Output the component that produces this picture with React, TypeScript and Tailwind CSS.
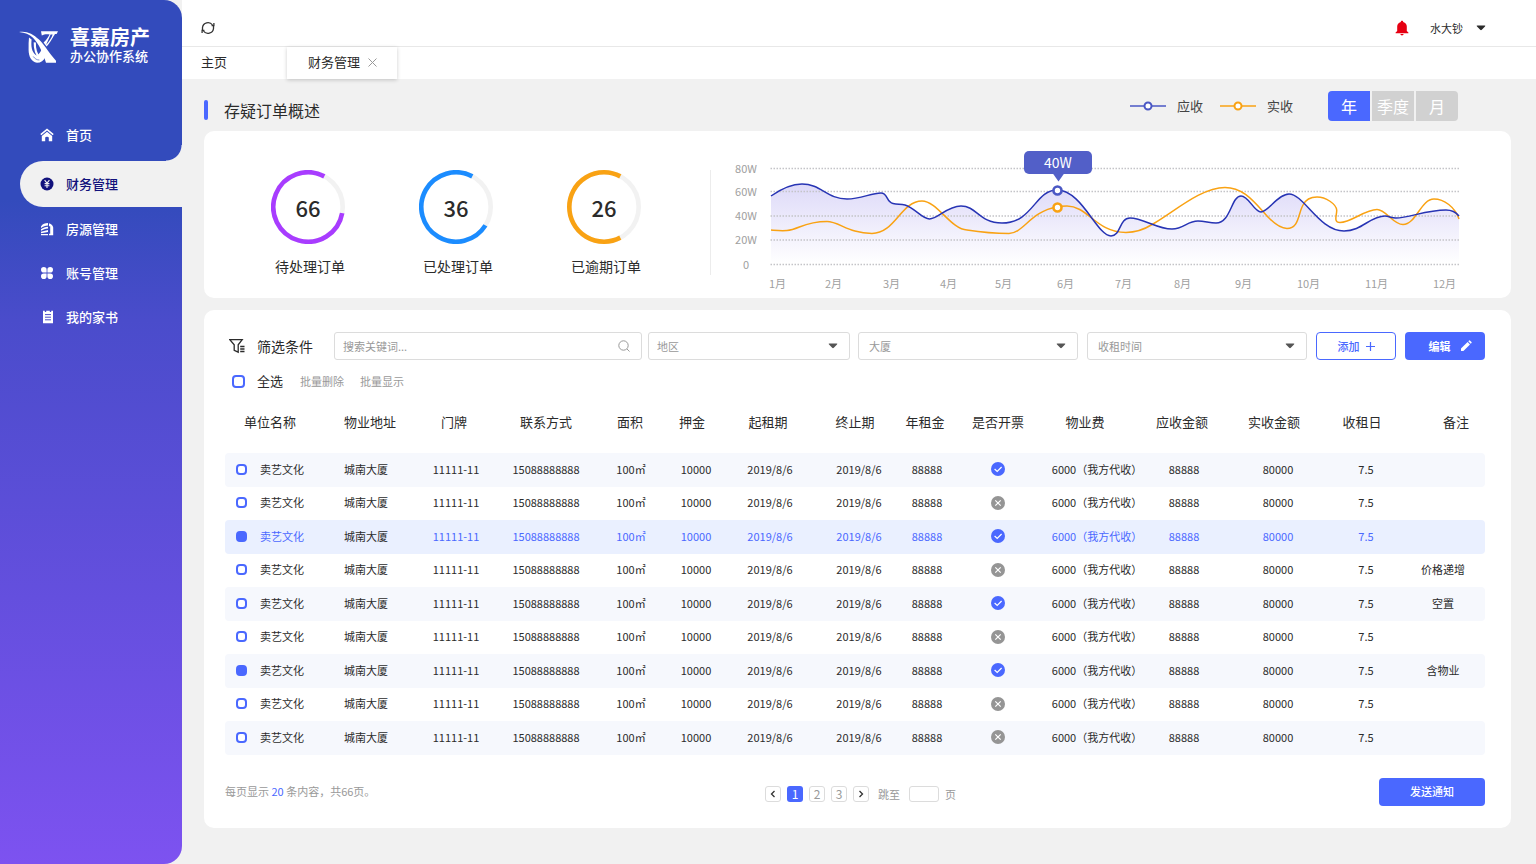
import React, { useState } from "react";

const MENU = [
  { label: "首页", icon: HomeIcon },
  { label: "财务管理", icon: YenIcon, active: true },
  { label: "房源管理", icon: BuildingIcon },
  { label: "账号管理", icon: CloverIcon },
  { label: "我的家书", icon: BookIcon },
];

const STATS = [
  { value: 66, label: "待处理订单", color: "#a83cff", start: 28, end: 100 },
  { value: 36, label: "已处理订单", color: "#1b8cff", start: 28, end: 122 },
  { value: 26, label: "已逾期订单", color: "#f9a213", start: 28, end: 152 },
];

const COLUMNS = [
  { title: "单位名称", width: "w-[92px]", head: "pr-0.5" },
  { title: "物业地址", width: "w-[98px]", head: "pl-2" },
  { title: "门牌", width: "w-[82px]", head: "pr-1" },
  { title: "联系方式", width: "w-[98px]", head: "" },
  { title: "面积", width: "w-[72px]", head: "pr-0.5" },
  { title: "押金", width: "w-[58px]", head: "pr-2" },
  { title: "起租期", width: "w-[90px]", head: "pr-1" },
  { title: "终止期", width: "w-[88px]", head: "pr-2" },
  { title: "年租金", width: "w-[48px]", head: "pr-1" },
  { title: "是否开票", width: "w-[94px]", head: "" },
  { title: "物业费", width: "w-[104px]", head: "pr-6" },
  { title: "应收金额", width: "w-[70px]", head: "pr-1" },
  { title: "实收金额", width: "w-[118px]", head: "pr-2" },
  { title: "收租日", width: "w-[58px]", head: "pr-2" },
  { title: "备注", width: "w-[90px]", head: "pl-8" },
];

const ROWS = [
  { invoiced: true, note: "" },
  { invoiced: false, note: "" },
  { invoiced: true, note: "", checked: true, highlight: true },
  { invoiced: false, note: "价格递增" },
  { invoiced: true, note: "空置" },
  { invoiced: false, note: "" },
  { invoiced: true, note: "含物业", checked: true },
  { invoiced: false, note: "" },
  { invoiced: false, note: "" },
];

const GRID_LINES = [
  { label: "80W", y: 37.5 },
  { label: "60W", y: 60.5 },
  { label: "40W", y: 85 },
  { label: "20W", y: 109 },
  { label: "0", y: 133.5 },
];

const MONTHS = [66, 122, 180, 237, 292, 354, 412, 471, 532, 597, 665, 733];

const DUE_LINE =
  "M60 65C70 58 80 53 91 53C110 53 116 68 136 68C150 68 160 62 170 62C177 62 175 71 182 72.5C187 73.5 189 73 194 74C204 77 211 88 218.5 88C227 88 236 75 250 75C266 75 268 92 291 92C322 92 324 59 346 59C371 59 386 105 400 105C410 105 408 87 419 87C432 87 446 98 461 98C473 98 476 90 487 90C494 90 498 92 505 92C520 92 520 65 530 65C538 65 543 81 550 81C557 81 567 63 578 63C593 63 608 100 633 100C651 100 659 85 674 85C678 85 680 87 685 87C698 87 715 79 735 79C740 79 744 80 748 85";
const PAID_LINE =
  "M60 99C66 99.5 70 100 76 99.5C88 98.5 93 90.5 116 90.5C128 90.5 138 102.5 161 102.5C184 102.5 190 70 211 70C226 70 240 98.5 256 99C272 101.5 284 102.5 298 102.5C312 102.5 320 80 346 76C349 75 352 75 356 75C377 75 385 101.5 415 101.5C426 101.5 434 98 442 93C463 81 490 56.5 514 56.5C530 56.5 540 67 552 80.5C560 90 568 97.5 576 97.5C588 97.5 587 83 592 74C595 68 601 66 606 66C615 66 625 73 625.7 79C626 84 622 91.5 629 91.5C640 91.5 654 78.5 666 78.5C675 78.5 682 93.5 692 93.5C705 93.5 710 68 723 68C733 68 744 76 748 88";

function HomeIcon() {
  return (
    <svg viewBox="0 0 14 14" className="size-3.5" fill="currentColor" aria-hidden="true">
      <path d="M7 .4 13.7 6.1 12.7 7.3 7 2.5 1.3 7.3.3 6.1Z" />
      <path d="M7 3.8 12.2 8.1V13.2H8.8V9.8Q8.8 8.8 7 8.8T5.2 9.8V13.2H1.8V8.1Z" />
    </svg>
  );
}

function YenIcon() {
  return (
    <svg viewBox="0 0 14 14" className="size-3.5" aria-hidden="true">
      <circle cx="7" cy="7" r="6.5" fill="currentColor" />
      <path d="M4.6 3.2 7 6.2 9.4 3.2M7 6.2V11M4.6 6.6H9.4M4.6 8.7H9.4" stroke="#f1f1f1" strokeWidth="1.1" fill="none" />
    </svg>
  );
}

function BuildingIcon() {
  return (
    <svg viewBox="0 0 14 14" className="size-3.5" fill="currentColor" aria-hidden="true">
      <path d="M1 4.4C2.6 2 5 1 8 1V3.4C5.2 3.6 3 4.4 1 6Z" />
      <path d="M1 7.2C3.2 5.6 5.2 4.9 8 4.7V6.6C5.2 6.9 3.2 7.6 1 8.8Z" />
      <path d="M1 9.8 8 8V9.9L1 11.2ZM1 11.9H8V13.2H1Z" />
      <path d="M9 1.2C11.6 2 13 3.4 13.2 5.6V13.2H9V11.8H10.2V4.2H9Z" />
    </svg>
  );
}

function CloverIcon() {
  return (
    <svg viewBox="0 0 14 14" className="size-3.5" fill="currentColor" aria-hidden="true">
      <path d="M3.8 1A2.8 2.8 0 1 0 3.8 6.6H6.6V3.8A2.8 2.8 0 0 0 3.8 1Z" />
      <path d="M10.2 1A2.8 2.8 0 1 1 10.2 6.6H7.4V3.8A2.8 2.8 0 0 1 10.2 1Z" />
      <path d="M3.8 13A2.8 2.8 0 1 1 3.8 7.4H6.6V10.2A2.8 2.8 0 0 1 3.8 13Z" />
      <path d="M10.2 13A2.8 2.8 0 1 0 10.2 7.4H7.4V10.2A2.8 2.8 0 0 0 10.2 13Z" />
    </svg>
  );
}

function BookIcon() {
  return (
    <svg viewBox="0 0 14 14" className="size-3.5" aria-hidden="true">
      <path d="M3 .8H4.8V2H6.2V.8H9.8V2H11.2V.8H13V13.2H3Z" fill="currentColor" />
      <path d="M5 4.6H11M5 7.2H11M5 9.8H11" stroke="#4a4ccb" strokeWidth="1" />
    </svg>
  );
}

function Logo() {
  return (
    <svg viewBox="0 0 42 36" className="mt-0.5 h-9 w-[42px] shrink-0" fill="#fff" aria-hidden="true">
      <path d="M0 4C7 2.6 14 5.6 20 11.6C26 17.6 30 25 37 32.8V34.8H27C24 25 20 16 14 9.8C10.400 6.400 6 4.600 0 4Z" />
      <path d="M22 3.200H39L37.600 6H36C34 9 32.600 12.400 27.600 18.600L24.600 14.600C28 11 29.600 8.400 30.600 6.400C27.600 5.800 25 6.200 22.800 7.600Z" />
      <path d="M31.600 6.600H33.600C32.600 10 30 14 27 17Z" fill="#334bbc" />
      <path d="M10 9.600 12.600 11.400C12 17 12.200 24 17.400 27.400C20 26.600 21.600 24 22.600 21L26.400 29C24.600 32.600 22 34.800 18 34.800C12.400 34 9.600 28.400 9.600 22Q9.400 15 10 9.600Z" />
      <path d="M15.800 14.400C15.600 20 17 26 20.800 30.400" stroke="#fff" strokeWidth="2.200" fill="none" />
      <path d="M14.200 28.400C16 31 18 32 20.400 32" stroke="#334bbc" strokeWidth=".6" fill="none" />
    </svg>
  );
}

function Caret({ className }: { className: string }) {
  return (
    <svg viewBox="0 0 10 6" className={className} fill="currentColor" aria-hidden="true">
      <path d="M1.4.5H8.6Q10 .5 9 1.5L5.8 4.8Q5 5.6 4.2 4.8L1 1.5Q0 .5 1.4.5Z" />
    </svg>
  );
}

function Ring({ color, start, end }: { color: string; start: number; end: number }) {
  const at = (deg: number) => {
    const a = ((deg - 90) * Math.PI) / 180;
    return `${37 + 34.7 * Math.cos(a)} ${37 + 34.7 * Math.sin(a)}`;
  };
  return (
    <svg viewBox="0 0 74 74" className="col-start-1 row-start-1 size-[74px]" fill="none" aria-hidden="true">
      <circle cx="37" cy="37" r="34.7" stroke="#f2f2f2" strokeWidth="4.6" />
      <path d={`M${at(end)}A34.7 34.7 0 1 1 ${at(start)}`} stroke={color} strokeWidth="4.6" />
    </svg>
  );
}

function Chart() {
  return (
    <svg viewBox="0 0 800 167" className="min-w-0 flex-1 text-[11px]" role="img" aria-label="应收与实收">
      <defs>
        <linearGradient id="due-area" x1="0" y1="50" x2="0" y2="133" gradientUnits="userSpaceOnUse">
          <stop offset="0" stopColor="#dcd8f8" />
          <stop offset="1" stopColor="#ffffff" />
        </linearGradient>
      </defs>
      <path d={`${DUE_LINE}V133H60Z`} fill="url(#due-area)" />
      {GRID_LINES.map((g) => (
        <g key={g.label}>
          <text x="35" y={g.y + 4} textAnchor="middle" fill="#a0a0a0">{g.label}</text>
          <path d={`M59.5 ${g.y}H748`} stroke="#c4c4c8" strokeWidth="1.4" strokeDasharray="1.5 1.5" />
        </g>
      ))}
      {MONTHS.map((x, i) => (
        <text key={x} x={x + 0.5} y="157" textAnchor="middle" fill="#a0a0a0">{`${i + 1}月`}</text>
      ))}
      <path d={PAID_LINE} fill="none" stroke="#f9a213" strokeWidth="1.5" />
      <path d={DUE_LINE} fill="none" stroke="#2734b4" strokeWidth="1.5" />
      <circle cx="346.5" cy="59.5" r="4" fill="#fff" stroke="#4a57c4" strokeWidth="2.6" />
      <circle cx="346.5" cy="76.5" r="4" fill="#fff" stroke="#f9a213" strokeWidth="2.6" />
      <rect x="313" y="20" width="68" height="23" rx="5" fill="#525fc8" />
      <path d="M341.5 42H353.5L347.5 50.5Z" fill="#525fc8" />
      <text x="347" y="37" textAnchor="middle" fill="#fff" className="text-[14px]">40W</text>
    </svg>
  );
}

function LegendItem({ label, color }: { label: string; color: string }) {
  return (
    <span className="flex items-center gap-[11px] text-[13px] text-[#444]">
      <svg viewBox="0 0 36 10" className="h-2.5 w-9" aria-hidden="true">
        <path d="M0 5H36" stroke={color} strokeWidth="1.5" />
        <circle cx="18" cy="5" r="3.5" fill="#fff" stroke={color} strokeWidth="2" />
      </svg>
      {label}
    </span>
  );
}

function FilterSelect({ label, className, pad }: { label: string; className: string; pad: string }) {
  return (
    <span className={`grid items-center ${className}`}>
      <select
        aria-label={label}
        className={`col-start-1 row-start-1 h-7 w-full appearance-none rounded-[3px] border border-[#dcdcdc] bg-white text-[11px] text-[#999] ${pad}`}
      >
        <option>{label}</option>
      </select>
      <Caret className="pointer-events-none col-start-1 row-start-1 mr-3 h-1.5 w-2.5 justify-self-end text-[#555]" />
    </span>
  );
}

function StatusIcon({ ok }: { ok: boolean }) {
  return (
    <svg viewBox="0 0 14 14" className="mx-auto size-3.5" fill="none" role="img" aria-label={ok ? "是" : "否"}>
      <circle cx="7" cy="7" r="7" fill={ok ? "#4a68ff" : "#959595"} />
      <path d={ok ? "M3.6 7 6.2 9.4 10.6 5" : "M4.3 4.3 9.7 9.7M9.7 4.3 4.3 9.7"} stroke="#fff" strokeWidth="1.2" />
    </svg>
  );
}

export default function App() {
  const [checked, setChecked] = useState(ROWS.map((r) => !!r.checked));
  const [period, setPeriod] = useState("年");
  const toggle = (i: number) => setChecked(checked.map((c, n) => (n === i ? !c : c)));
  const box =
    "shrink-0 appearance-none border-[#4a68ff] bg-white checked:bg-[#4a68ff]";
  const pager =
    "grid size-4 place-items-center rounded-[3px] border border-[#dcdcdc] text-[12px] leading-none text-[#999]";

  return (
    <div className="flex min-h-screen bg-[#f1f1f1] font-['Noto_Sans_CJK_SC',sans-serif] text-[#2b2b2b]">
      <aside className="w-[182px] shrink-0 rounded-r-[18px] bg-[linear-gradient(to_bottom,#334bbc_0px,#334bbc_200px,#4a4ccb_320px,#7d52f0_100%)] text-white">
        <div className="flex h-[113px] items-start gap-2 pt-[26px] pl-[19px]">
          <Logo />
          <div className="pl-px">
            <p className="text-[20px] leading-[22px] font-bold">喜嘉房产</p>
            <p className="text-[13px] leading-[15px] font-medium">办公协作系统</p>
          </div>
        </div>
        <nav className="flex flex-col text-[13px] font-medium">
          {MENU.map(({ label, icon: Icon, active }) => (
            <a
              key={label}
              href="#"
              className={
                active
                  ? "relative ml-5 flex h-[46px] items-center gap-3 rounded-l-full bg-[#f1f1f1] pl-5 text-[#12127c]"
                  : "flex h-11 items-center gap-3 pl-10 first:mb-1"
              }
            >
              {active && (
                <span className="absolute -top-4 right-0 size-4 bg-[radial-gradient(circle_at_0_0,transparent_15px,#f1f1f1_16px)]" />
              )}
              <Icon />
              {label}
            </a>
          ))}
        </nav>
      </aside>

      <div className="flex min-w-0 flex-1 flex-col">
        <header className="bg-white">
          <div className="flex h-[47px] items-center justify-between border-b border-[#e8e8e8] pt-2.5 pr-[50px] pl-[19px]">
            <button type="button" aria-label="刷新" className="text-[#333]">
              <svg viewBox="0 0 14 14" className="size-3.5" fill="none" stroke="currentColor" strokeWidth="1.3" aria-hidden="true">
                <path d="M1.5 9V6.5A5.5 5.5 0 0 1 11.5 4M12.5 5V7.5A5.5 5.5 0 0 1 2.5 10" />
                <path d="M12.9 2V4.6H10.6M1.1 12V9.4H3.4" />
              </svg>
            </button>
            <div className="flex items-center">
              <button type="button" aria-label="通知" className="mr-[21px] text-[#e60012]">
                <svg viewBox="0 0 14 16" className="h-4 w-3.5" fill="currentColor" aria-hidden="true">
                  <path d="M7 .8C7.8.8 8.2 1.3 8.2 1.9C10.5 2.500 11.800 4.300 11.800 6.500V11L13.400 12.600V13.200H.6V12.600L2.200 11V6.500C2.200 4.300 3.500 2.500 5.800 1.900C5.800 1.300 6.200.8 7 .8ZM5.400 14H8.600C8.400 15 7.800 15.400 7 15.400S5.600 15 5.400 14Z" />
                </svg>
              </button>
              <button type="button" className="flex items-center gap-[13px] text-[11px]">
                水大钞
                <Caret className="h-1.5 w-2.5" />
              </button>
            </div>
          </div>
          <div className="flex h-8 text-[13px]">
            <a href="#" className="flex w-[105px] items-center pb-0.5 pl-[19px]">主页</a>
            <div className="flex w-[110px] items-center gap-2 bg-white pb-0.5 pl-[21px] shadow-[0_1px_4px_rgba(0,0,0,0.2)]">
              <a href="#">财务管理</a>
              <button type="button" aria-label="关闭" className="text-[#999]">
                <svg viewBox="0 0 9 9" className="size-[9px]" stroke="currentColor" aria-hidden="true">
                  <path d="M.5.5 8.5 8.5M8.5.5.5 8.5" />
                </svg>
              </button>
            </div>
          </div>
        </header>

        <main className="flex flex-col pr-[25px] pb-9 pl-[22px]">
          <div className="flex h-[52px] items-center justify-between pt-0.5 pr-[53px]">
            <h1 className="flex items-center gap-4 pt-2 text-[16px]">
              <span className="h-5 w-1 rounded-sm bg-[#4a68ff]" />
              存疑订单概述
            </h1>
            <div className="flex items-center">
              <div className="flex items-center gap-[17px] pr-[35px]">
                <LegendItem label="应收" color="#4a57c4" />
                <LegendItem label="实收" color="#f9a213" />
              </div>
              <div className="flex gap-0.5 overflow-hidden rounded-[4px]">
                {["年", "季度", "月"].map((p) => (
                  <button
                    key={p}
                    type="button"
                    onClick={() => setPeriod(p)}
                    className={`h-[30px] w-[42px] text-[16px] text-white ${p === period ? "bg-[#4a68ff]" : "bg-[#d1d1d1]"}`}
                  >
                    {p}
                  </button>
                ))}
              </div>
            </div>
          </div>

          <section className="flex items-end rounded-[10px] bg-white">
            <div className="mb-[23px] flex w-[507px] shrink-0 border-r border-[#ececec] pl-[30px]">
              {STATS.map((s) => (
                <div key={s.label} className="flex h-[105px] w-[148px] flex-col items-center">
                  <div className="grid place-items-center">
                    <Ring color={s.color} start={s.start} end={s.end} />
                    <span className="col-start-1 row-start-1 text-[22px] leading-none font-medium">{s.value}</span>
                  </div>
                  <p className="pt-3 pl-1 text-[14px] leading-5">{s.label}</p>
                </div>
              ))}
            </div>
            <Chart />
          </section>

          <section className="mt-3 rounded-[10px] bg-white pt-[22px] pr-[26px] pb-[22px] pl-[21px]">
            <div className="flex items-center">
              <svg viewBox="0 0 18 16" className="ml-1 h-4 w-[18px] shrink-0" fill="none" stroke="#2b2b2b" strokeWidth="1.3" aria-hidden="true">
                <path d="M.8 1.7H13.2L9.2 6.8V14.2L5.2 12.4V6.8Z" />
                <path d="M11.2 8.5H15.5M11.2 11H15.5M11.2 13.5H15.5" />
              </svg>
              <h2 className="ml-2.5 w-[77px] shrink-0 text-[14px]">筛选条件</h2>
              <div className="flex min-w-0 flex-1 gap-1.5">
                <div className="grid min-w-0 flex-1 items-center">
                  <input
                    type="search"
                    aria-label="搜索关键词"
                    placeholder="搜索关键词..."
                    className="col-start-1 row-start-1 h-7 w-full rounded-[3px] border border-[#dcdcdc] px-2 text-[11px] placeholder:text-[#999]"
                  />
                  <svg viewBox="0 0 12 12" className="pointer-events-none col-start-1 row-start-1 mr-3 size-3 justify-self-end" fill="none" stroke="#999" aria-hidden="true">
                    <circle cx="5.5" cy="5.5" r="4.7" />
                    <path d="M9 9 11.5 11.5" />
                  </svg>
                </div>
                <FilterSelect label="地区" className="w-[202px]" pad="pl-2" />
              </div>
              <div className="ml-2 flex gap-[9px]">
                <FilterSelect label="大厦" className="w-[220px]" pad="pl-2.5" />
                <FilterSelect label="收租时间" className="w-[220px]" pad="pl-2.5" />
                <button type="button" className="flex h-7 w-20 items-center justify-center gap-1.5 rounded-[4px] border border-[#4a68ff] text-[11px] font-medium text-[#4a68ff]">
                  添加
                  <svg viewBox="0 0 9 9" className="size-[9px]" stroke="currentColor" strokeWidth="1.2" aria-hidden="true">
                    <path d="M4.5 0V9M0 4.5H9" />
                  </svg>
                </button>
                <button type="button" className="flex h-7 w-20 items-center justify-center gap-[9px] rounded-[4px] bg-[#4a68ff] pl-2.5 text-[11px] font-bold text-white">
                  编辑
                  <svg viewBox="0 0 12 12" className="size-3" fill="currentColor" aria-hidden="true">
                    <path d="M1 8.6 7.6 2 10 4.4 3.4 11H1ZM8.3 1.3 9.1.5Q9.5.1 9.9.5L11.5 2.1Q11.9 2.5 11.5 2.9L10.7 3.7Z" />
                  </svg>
                </button>
              </div>
            </div>

            <div className="mt-[9px] flex h-6 items-center pl-[7px] text-[11px] text-[#999]">
              <label className="flex items-center gap-3 text-[13px] text-[#2b2b2b]">
                <input
                  type="checkbox"
                  checked={checked.every(Boolean)}
                  onChange={(e) => setChecked(ROWS.map(() => e.target.checked))}
                  className={`size-[13px] rounded-[4px] border-2 ${box}`}
                />
                全选
              </label>
              <button type="button" className="ml-[17px]">批量删除</button>
              <button type="button" className="ml-4">批量显示</button>
            </div>

            <table className="w-full table-fixed border-separate border-spacing-0 text-center text-[11px] whitespace-nowrap">
              <colgroup>
                {COLUMNS.map((c) => (
                  <col key={c.title} className={c.width} />
                ))}
              </colgroup>
              <thead>
                <tr className="h-[60px] text-[13px]">
                  {COLUMNS.map((c) => (
                    <th key={c.title} scope="col" className={`p-0 pb-0.5 font-normal ${c.head}`}>{c.title}</th>
                  ))}
                </tr>
              </thead>
              <tbody>
                {ROWS.map((r, i) => (
                  <tr
                    key={i}
                    className={`odd:h-[34px] even:h-[33px] [&>td]:p-0 [&>td]:pb-0.5 [&>td:first-child]:rounded-l-[4px] [&>td:last-child]:rounded-r-[4px] ${
                      r.highlight ? "bg-[#eaf0ff] text-[#4a68ff]" : "odd:bg-[#f6f8fd]"
                    }`}
                  >
                    <td>
                      <label className="flex items-center justify-center gap-[13px] pr-0.5">
                        <input
                          type="checkbox"
                          checked={checked[i]}
                          onChange={() => toggle(i)}
                          className={`size-[11px] rounded-[4px] border-2 ${box}`}
                        />
                        卖艺文化
                      </label>
                    </td>
                    <td className="text-[#2b2b2b]">城南大厦</td>
                    <td>11111-11</td>
                    <td>15088888888</td>
                    <td>100㎡</td>
                    <td>10000</td>
                    <td>2019/8/6</td>
                    <td>2019/8/6</td>
                    <td>88888</td>
                    <td><StatusIcon ok={r.invoiced} /></td>
                    <td>6000（我方代收）</td>
                    <td>88888</td>
                    <td>80000</td>
                    <td>7.5</td>
                    <td className="pl-1.5!">{r.note}</td>
                  </tr>
                ))}
              </tbody>
            </table>

            <div className="mt-[23px] grid grid-cols-[3fr_4fr] items-center text-[11px] text-[#999]">
              <p className="pb-0.5">
                每页显示 <span className="text-[#4a68ff]">20</span> 条内容，共66页。
              </p>
              <div className="flex items-center justify-between">
                <div className="flex items-center gap-1.5 pt-1">
                  <button type="button" aria-label="上一页" className={pager}>
                    <svg viewBox="0 0 6 8" className="h-2 w-1.5" fill="none" stroke="#333" strokeWidth="1.3"><path d="M4.5 1 1.5 4 4.5 7" /></svg>
                  </button>
                  <button type="button" className="grid size-4 place-items-center rounded-[3px] bg-[#4a68ff] text-[12px] leading-none text-white">1</button>
                  <button type="button" className={pager}>2</button>
                  <button type="button" className={pager}>3</button>
                  <button type="button" aria-label="下一页" className={pager}>
                    <svg viewBox="0 0 6 8" className="h-2 w-1.5" fill="none" stroke="#333" strokeWidth="1.3"><path d="M1.5 1 4.5 4 1.5 7" /></svg>
                  </button>
                  <label className="ml-[3px] flex items-center gap-[9px]">
                    跳至
                    <input type="text" aria-label="页码" className="h-4 w-[30px] rounded-[3px] border border-[#dcdcdc] px-1" />
                  </label>
                  页
                </div>
                <button type="button" className="h-7 w-[106px] rounded-[4px] bg-[#4a68ff] pb-0.5 text-[11px] font-medium text-white">
                  发送通知
                </button>
              </div>
            </div>
          </section>
        </main>
      </div>
    </div>
  );
}
